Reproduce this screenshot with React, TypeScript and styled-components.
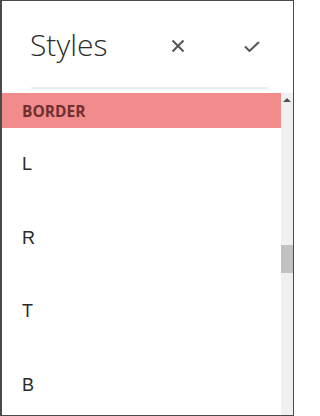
import styled, { createGlobalStyle } from "styled-components";

const GlobalStyle = createGlobalStyle`
  html, body {
    margin: 0;
    padding: 0;
    background: #ffffff;
  }
  * { box-sizing: border-box; }
`;

const Frame = styled.div`
  width: 294px;
  height: 416px;
  border: 1px solid #4a4a4a;
  border-left-width: 2px;
  background: #fff;
  display: flex;
  flex-direction: column;
  overflow: hidden;
`;

const Header = styled.header`
  height: 86px;
  flex-shrink: 0;
  display: flex;
  align-items: center;
  padding: 0 19px 0 28px;
`;

const Title = styled.h1`
  flex: 1;
  margin: 0;
  font-family: "Open Sans", "Liberation Sans", sans-serif;
  font-weight: 300;
  font-size: 30px;
  line-height: 1;
  color: #2c2c2c;
  padding-top: 2px;
`;

const IconButton = styled.button<{ $gap?: number }>`
  width: 44px;
  height: 32px;
  display: flex;
  align-items: center;
  justify-content: center;
  border: none;
  background: none;
  padding: 0;
  margin-left: ${(p) => p.$gap ?? 0}px;
  margin-top: 4px;
  cursor: pointer;
`;

const Divider = styled.div`
  height: 2px;
  flex-shrink: 0;
  margin: 0 25px 0 29px;
  background: #ededed;
`;

const Body = styled.div`
  flex: 1;
  display: flex;
  margin-top: 4px;
  min-height: 0;
`;

const List = styled.div`
  flex: 1;
  display: flex;
  flex-direction: column;
`;

const SectionHead = styled.div`
  height: 35px;
  flex-shrink: 0;
  display: flex;
  align-items: center;
  padding-left: 20px;
  background: #f28b8b;
  font-family: "Open Sans", "Liberation Sans", sans-serif;
  font-weight: 700;
  font-size: 15.5px;
  color: #6e2f2f;
  margin-right: -3px;
`;

const Row = styled.div`
  height: 73.5px;
  flex-shrink: 0;
  display: flex;
  align-items: center;
  padding-left: 20px;
  font-family: "Liberation Sans", Arial, sans-serif;
  font-size: 18px;
  color: #2b2b2b;
`;

const ScrollTrack = styled.div`
  width: 12px;
  background: #f0f0f0;
  display: flex;
  flex-direction: column;
  align-items: center;
  padding-top: 5px;
`;

const UpArrow = styled.div`
  width: 0;
  height: 0;
  border-left: 4px solid transparent;
  border-right: 4px solid transparent;
  border-bottom: 4px solid #505050;
`;

const Thumb = styled.div`
  width: 12px;
  height: 28px;
  margin-top: 143px;
  background: #c1c1c1;
`;

const sides = ["L", "R", "T", "B"];

function App() {
  return (
    <>
      <GlobalStyle />
      <Frame>
        <Header>
          <Title>Styles</Title>
          <IconButton aria-label="cancel">
            <svg width="14" height="14" viewBox="0 0 14 14">
              <path d="M1.5 1.5 L12.5 12.5 M12.5 1.5 L1.5 12.5" stroke="#555" strokeWidth="2" fill="none" />
            </svg>
          </IconButton>
          <IconButton aria-label="apply" $gap={30}>
            <svg width="16" height="11" viewBox="0 0 16 11">
              <path d="M1 5.5 L5.5 10 L15 1" stroke="#555" strokeWidth="2" fill="none" />
            </svg>
          </IconButton>
        </Header>
        <Divider />
        <Body>
          <List>
            <SectionHead>BORDER</SectionHead>
            {sides.map((s) => (
              <Row key={s}>{s}</Row>
            ))}
          </List>
          <ScrollTrack>
            <UpArrow />
            <Thumb />
          </ScrollTrack>
        </Body>
      </Frame>
    </>
  );
}

export default App;
